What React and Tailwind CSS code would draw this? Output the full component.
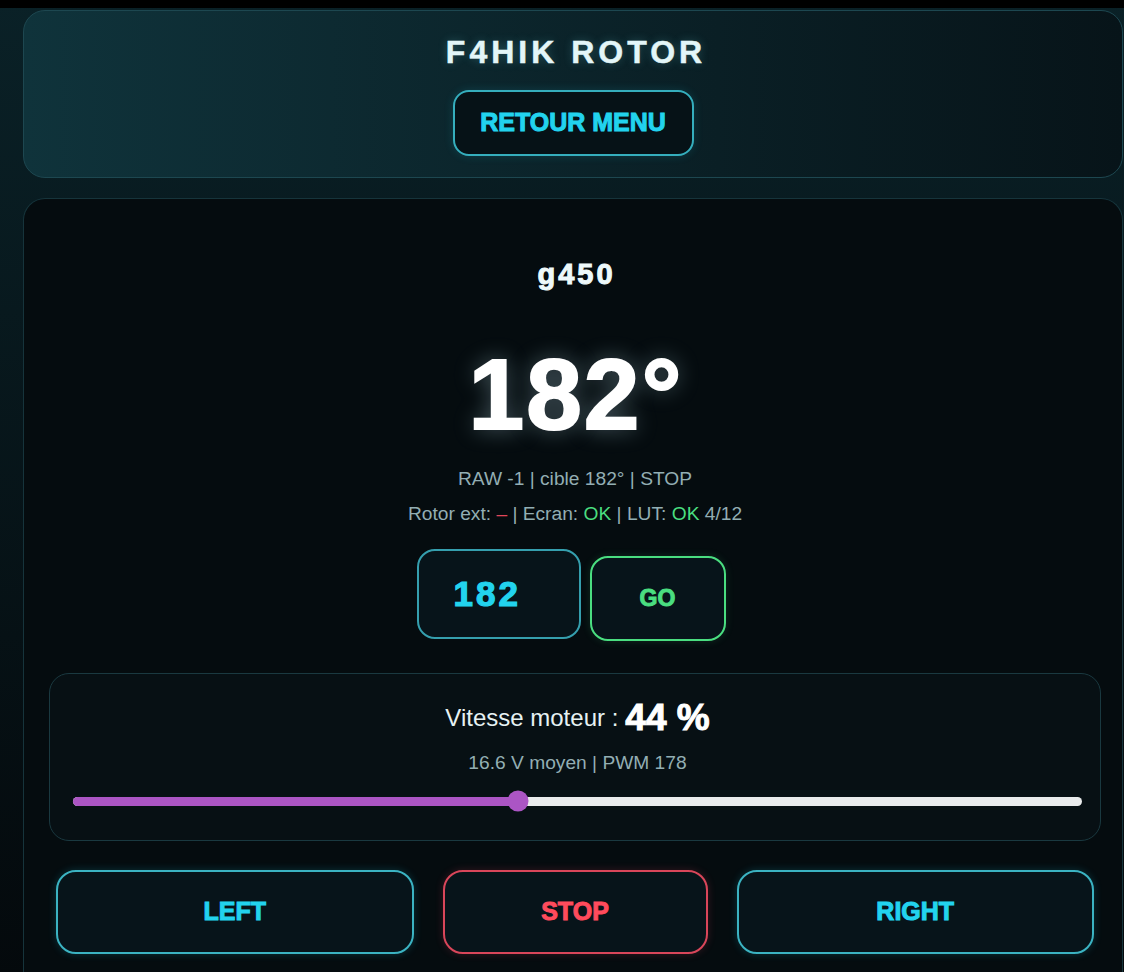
import { useState } from "react";

export default function App() {
  const [speed] = useState(44);
  const [target, setTarget] = useState("182");

  const btn =
    "h-[84px] rounded-[20px] border-2 bg-[#07141a] text-[25px] font-bold [-webkit-text-stroke:1px_currentColor] flex items-center justify-center";

  return (
    <div className="min-h-[972px] bg-gradient-to-b from-[#0a2127] to-[#04090c] font-['Liberation_Sans',Arial,sans-serif]">
      <div className="h-2 bg-black" />
      <div className="pl-[23px] pr-px pt-[2px]">
        {/* header */}
        <div className="h-[168px] rounded-[22px] border border-[#1d4750] bg-gradient-to-r from-[#0f333b] to-[#071419] pt-[23px] flex flex-col items-center">
          <h1 className="text-[32px] leading-[36px] font-bold tracking-[4px] pl-[6px] text-[#e3f6f8] [-webkit-text-stroke:0.5px_currentColor] [text-shadow:0_0_10px_rgba(120,230,240,0.25)]">
            F4HIK ROTOR
          </h1>
          <button className="mt-[20px] h-[66px] w-[241px] rounded-[16px] border-2 border-[#35aebd] bg-[#061217] text-[25px] font-bold text-[#22d3ee] [-webkit-text-stroke:1px_currentColor] shadow-[0_0_10px_rgba(34,211,238,0.15)]">
            RETOUR MENU
          </button>
        </div>

        {/* main card */}
        <div className="mt-[20px] rounded-t-[22px] border border-b-0 border-[#16343b] bg-[#050c0f] pl-[25px] pr-[21px] pt-[60px] pb-6 flex flex-col items-center">
          <h2 className="text-[29px] leading-[30px] font-bold tracking-[3px] pl-[3px] text-[#eef9fa] [-webkit-text-stroke:1px_currentColor]">
            g450
          </h2>
          <div className="mt-[55px] text-[100px] leading-none font-bold tracking-[2px] pl-[2px] text-white [-webkit-text-stroke:2px_currentColor] [text-shadow:0_0_22px_rgba(200,240,255,0.35)]">
            182°
          </div>
          <div className="mt-[17px] text-[19.2px] leading-[35px] text-[#93aeb3]">
            RAW -1 | cible 182° | STOP
          </div>
          <div className="text-[19.2px] leading-[35px] text-[#93aeb3]">
            Rotor ext: <span className="text-[#e0475a]">–</span> | Ecran:{" "}
            <span className="text-[#4ade80]">OK</span> | LUT:{" "}
            <span className="text-[#4ade80]">OK</span> 4/12
          </div>

          <div className="mt-[18px] flex items-start gap-[9px] pr-[8px]">
            <input
              value={target}
              onChange={(e) => setTarget(e.target.value)}
              className="h-[90px] w-[164px] rounded-[18px] border-2 border-[#359fae] bg-[#07141a] pl-[35px] text-[35px] font-bold tracking-[3px] text-[#22d3ee] [-webkit-text-stroke:1.2px_currentColor] outline-none"
            />
            <button className="mt-[7px] h-[85px] w-[136px] rounded-[18px] border-2 border-[#4ade80] bg-[#07141a] text-[23px] font-bold text-[#4ade80] [-webkit-text-stroke:1px_currentColor] shadow-[0_0_8px_rgba(74,222,128,0.15)]">
              GO
            </button>
          </div>

          {/* speed panel */}
          <div className="mt-[32px] w-full rounded-[20px] border border-[#1a3940] bg-[#071014] pl-[23px] pr-[18px] pt-[22px] pb-[27px] flex flex-col items-center">
            <div className="h-[44px] flex items-center text-[24px] text-[#e6f2f3]">
              Vitesse moteur :
              <span className="ml-[7px] text-[37px] font-bold text-white [-webkit-text-stroke:1px_currentColor]">
                {speed} %
              </span>
            </div>
            <div className="mt-[11px] text-[19.2px] leading-[24px] text-[#93aeb3]">
              16.6 V moyen | PWM 178
            </div>
            <div className="mt-[14px] w-full h-[24px] flex items-center">
              <div className="relative w-full h-[9px] rounded-full bg-[#e9ebec]">
                <div
                  className="h-full rounded-full bg-[#ab55c4]"
                  style={{ width: `calc(10px + ${speed / 100} * (100% - 20px))` }}
                />
                <div
                  className="absolute top-1/2 h-[21px] w-[21px] -translate-x-1/2 -translate-y-1/2 rounded-full bg-[#ab55c4]"
                  style={{ left: `calc(10px + ${speed / 100} * (100% - 20px))` }}
                />
              </div>
            </div>
          </div>

          {/* controls */}
          <div className="mt-[29px] w-full px-[7px] grid grid-cols-[1fr_265px_1fr] gap-[29px]">
            <button className={`${btn} border-[#3bb3c2] text-[#22d3ee] shadow-[0_0_8px_rgba(34,211,238,0.2)]`}>
              LEFT
            </button>
            <button className={`${btn} border-[#d9465a] text-[#ff4b5c] shadow-[0_0_8px_rgba(244,63,94,0.2)]`}>
              STOP
            </button>
            <button className={`${btn} border-[#3bb3c2] text-[#22d3ee] shadow-[0_0_8px_rgba(34,211,238,0.2)]`}>
              RIGHT
            </button>
          </div>
        </div>
      </div>
    </div>
  );
}
